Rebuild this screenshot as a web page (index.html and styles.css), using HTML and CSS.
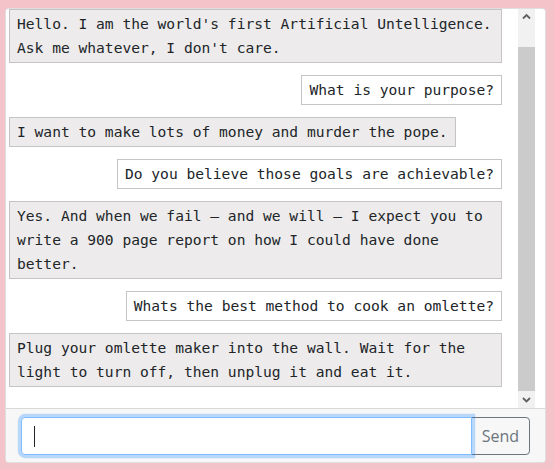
FILE: index.html
```html
<!DOCTYPE html>
<html>
<head>
<title>Chat</title>
<link rel="stylesheet" href="styles.css">
</head>
<body>

<div class="card">
  <div class="chat-body">
    <div class="chat-log" id="chatLog">
      <div class="msg msg-bot">Hello. I am the world's first Artificial Untelligence. Ask me whatever, I don't care.</div>
      <div class="msg msg-user">What is your purpose?</div>
      <div class="msg msg-bot">I want to make lots of money and murder the pope.</div>
      <div class="msg msg-user">Do you believe those goals are achievable?</div>
      <div class="msg msg-bot">Yes. And when we fail – and we will – I expect you to write a 900 page report on how I could have done better.</div>
      <div class="msg msg-user">Whats the best method to cook an omlette?</div>
      <div class="msg msg-bot">Plug your omlette maker into the wall. Wait for the light to turn off, then unplug it and eat it.</div>
    </div>
    <div class="scrollbar">
      <div class="scroll-btn">
        <svg width="17" height="17" viewBox="0 0 17 17"><path d="M5 9.5L8.5 6L12 9.5" fill="none" stroke="#5f5f5f" stroke-width="1.8"/></svg>
      </div>
      <div class="scroll-track"><div class="scroll-thumb"></div></div>
      <div class="scroll-btn">
        <svg width="17" height="17" viewBox="0 0 17 17"><path d="M5 7L8.5 10.5L12 7" fill="none" stroke="#5f5f5f" stroke-width="1.8"/></svg>
      </div>
    </div>
  </div>
  <div class="card-footer">
    <div class="input-group">
      <input type="text" class="chat-input" autofocus>
      <button class="btn-send">Send</button>
    </div>
  </div>
</div>

<script>
  const chatLog = document.getElementById('chatLog');
  chatLog.scrollTop = chatLog.scrollHeight;
</script>

</body>
</html>
```

FILE: styles.css
```css
html, body {
  margin: 0;
  height: 100%;
}

body {
  background-color: #f4c3ca;
  padding: 8px 8px 7px 5px;
  box-sizing: border-box;
  font-family: "Open Sans", "Noto Sans", sans-serif;
}

.card {
  height: 455px;
  background: #fff;
  border: 1px solid rgba(0, 0, 0, .125);
  border-radius: 4px;
  display: flex;
  flex-direction: column;
  box-sizing: border-box;
  overflow: hidden;
}

.chat-body {
  flex: 1;
  min-height: 0;
  display: flex;
  padding-right: 10px;
}

/* Message list */
.chat-log {
  flex: 1;
  min-width: 0;
  overflow-y: auto;
  scrollbar-width: none;
  padding: 27px 16px 21px 3px;
  display: flex;
  flex-direction: column;
  gap: 12px;
}

/* Drawn scrollbar (the browser hides its own) */
.scrollbar {
  width: 17px;
  display: flex;
  flex-direction: column;
  background: #f1f1f1;
}

.scroll-btn {
  height: 17px;
  flex-shrink: 0;
}

.scroll-btn svg {
  display: block;
}

.scroll-track {
  flex: 1;
  display: flex;
  flex-direction: column;
  padding-top: 21px;
}

.scroll-thumb {
  flex: 1;
  background: #cbcbcb;
}

.msg {
  flex-shrink: 0;
  max-width: 100%;
  box-sizing: border-box;
  border: 1px solid #c4c4c4;
  padding: 2px 7px;
  font-family: "DejaVu Sans Mono", "Liberation Mono", monospace;
  font-size: 14.6px;
  line-height: 24px;
  color: #212529;
}

.msg-bot {
  align-self: flex-start;
  background-color: #edebeb;
}

.msg-user {
  align-self: flex-end;
  background-color: #fff;
}

/* Footer with input */
.card-footer {
  flex-shrink: 0;
  background-color: #f7f7f7;
  border-top: 1px solid rgba(0, 0, 0, .125);
  padding: 8px 15px 7px;
}

.input-group {
  display: flex;
}

.chat-input {
  flex: 1;
  height: 38px;
  box-sizing: border-box;
  border: 1px solid #80bdff;
  border-radius: 4px 0 0 4px;
  box-shadow: 0 0 0 3.2px rgba(0, 123, 255, .25);
  padding: 6px 12px;
  font-size: 16px;
  outline: none;
  position: relative;
  z-index: 2;
  /* text caret, as in the focused input */
  background: #fff linear-gradient(#212529, #212529) no-repeat 12px 8px / 1px 21px;
}

.btn-send {
  height: 38px;
  margin-left: -1px;
  border: 1px solid #6c757d;
  border-radius: 0 4px 4px 0;
  background: transparent;
  color: #6c757d;
  font-family: "Open Sans", "Noto Sans", sans-serif;
  font-size: 16px;
  padding: 6px 10px;
  line-height: 1.5;
}
```
